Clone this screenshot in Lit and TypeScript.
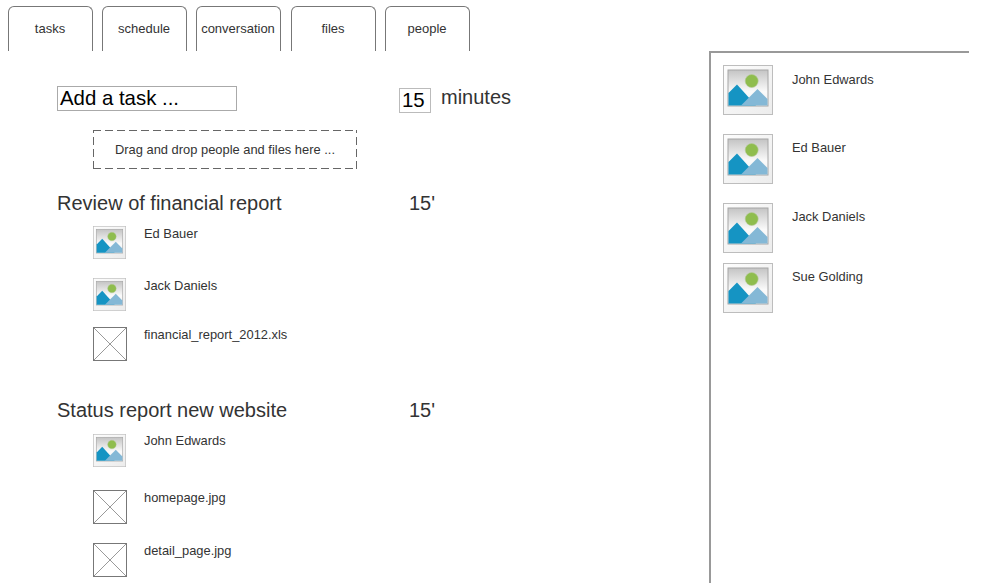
import { LitElement, html, css, svg } from "lit";
import { customElement } from "lit/decorators.js";

const pic = (size: number) => html`<svg class="icon" width=${size} height=${size} viewBox="0 0 50 50">
  ${svg`<defs>
    <linearGradient id="o" x1="0" y1="0" x2="1" y2="1"><stop offset="0" stop-color="#fdfdfd"/><stop offset="1" stop-color="#ececec"/></linearGradient>
    <linearGradient id="i" x1="0" y1="0" x2="0" y2="1"><stop offset="0" stop-color="#c4c4c4"/><stop offset="0.6" stop-color="#fafafa"/><stop offset="1" stop-color="#f2f2f2"/></linearGradient>
  </defs>
  <rect x="0.5" y="0.5" width="49" height="49" fill="url(#o)" stroke="#bdbdbd"/>
  <rect x="5" y="5" width="40" height="36" fill="url(#i)" stroke="#a6a6a6"/>
  <circle cx="28.7" cy="16" r="6.5" fill="#8fbd4e" stroke="#b5c99a" stroke-width="0.6"/>
  <path d="M5.5 28 L14 19.5 L33 40.5 L5.5 40.5 Z" fill="#1594c3"/>
  <path d="M18 40.5 L34.5 24 L44.5 34 L44.5 40.5 Z" fill="#84b8d6"/>`}
</svg>`;

const box = html`<svg class="icon" width="34" height="34" viewBox="0 0 34 34">
  ${svg`<rect x="0.5" y="0.5" width="33" height="33" fill="#fff" stroke="#777"/>
  <path d="M1 1 L33 33 M33 1 L1 33" stroke="#999" stroke-width="1" fill="none"/>`}
</svg>`;

const row = (top: number, h: number, icon: unknown, label: string, gap: number, dy = 1) =>
  html`<div class="item" style="margin-top:${top}px;height:${h}px">${icon}<span style="margin-left:${gap}px;margin-top:${dy}px">${label}</span></div>`;

const person = (top: number, label: string, dy: number) =>
  html`<div class="person" style="margin-top:${top}px">${pic(50)}<span style="margin-top:${dy}px">${label}</span></div>`;

@customElement("app-root")
export class AppRoot extends LitElement {
  static styles = css`
    :host { display: block; width: 989px; height: 583px; overflow: hidden; background: #fff;
      font-family: "Liberation Sans", Arial, sans-serif; color: #333; }
    .page { display: grid; grid-template-columns: 709px 260px; height: 583px; }
    .left { display: flex; flex-direction: column; min-width: 0; }
    .tabs { display: flex; gap: 9px; padding: 6px 0 0 8px; height: 45px; }
    .tab { width: 85px; box-sizing: border-box; height: 45px; border: 1px solid #777; border-bottom: 0;
      border-radius: 6px 6px 0 0; text-align: center; font-size: 13px; line-height: 44px; padding-right: 1px; white-space: nowrap; }
    .tab.wide { margin-right: 1px; }
    .main { padding: 35px 0 0 57px; display: flex; flex-direction: column; }
    .add { display: grid; grid-template-columns: 342px 32px auto; }
    .task { width: 180px; height: 25px; box-sizing: border-box; border: 1px solid #aaa; color: #000;
      font-size: 20.4px; line-height: 23px; padding-left: 2px; }
    .num { width: 32px; height: 25px; box-sizing: border-box; margin-top: 2px; border: 1px solid #bbb; color: #000;
      font-size: 20.4px; line-height: 23px; padding-left: 2px; }
    .min { font-size: 20px; margin-left: 10px; line-height: 23px; }
    .drop { width: 264px; height: 39px; box-sizing: border-box; margin: 17px 0 0 36px;
      background:
        repeating-linear-gradient(90deg, #666 0 8px, transparent 8px 12px) top left / 100% 1px no-repeat,
        repeating-linear-gradient(90deg, #666 0 8px, transparent 8px 12px) bottom left / 100% 1px no-repeat,
        repeating-linear-gradient(0deg, #666 0 8px, transparent 8px 12px) top left / 1px 100% no-repeat,
        repeating-linear-gradient(0deg, #666 0 8px, transparent 8px 12px) top right / 1px 100% no-repeat;
      font-size: 12.9px; line-height: 39px; text-align: center; }
    .head { display: grid; grid-template-columns: 352px auto; font-size: 20px; line-height: 24px; }
    .item { display: flex; margin-left: 36px; font-size: 12.9px; line-height: 14px; }
    .icon { flex: none; display: block; }
    .side { border-top: 2px solid #999; border-left: 2px solid #999; margin-top: 51px; box-sizing: border-box;
      padding: 12px 0 0 12px; display: flex; flex-direction: column; }
    .person { display: flex; font-size: 12.9px; line-height: 14px; }
    .person span { margin-left: 19px; }
  `;

  render() {
    return html`<div class="page">
      <div class="left">
        <div class="tabs">
          <div class="tab">tasks</div>
          <div class="tab">schedule</div>
          <div class="tab wide">conversation</div>
          <div class="tab">files</div>
          <div class="tab">people</div>
        </div>
        <div class="main">
          <div class="add">
            <div class="task">Add a task ...</div>
            <div class="num">15</div>
            <div class="min">minutes</div>
          </div>
          <div class="drop">Drag and drop people and files here ...</div>
          <div class="head" style="margin-top:22px"><span>Review of financial report</span><span>15'</span></div>
          ${row(11, 33, pic(33), "Ed Bauer", 18)}
          ${row(19, 33, pic(33), "Jack Daniels", 18)}
          ${row(16, 34, box, "financial_report_2012.xls", 17)}
          <div class="head" style="margin-top:37px"><span>Status report new website</span><span>15'</span></div>
          ${row(12, 33, pic(33), "John Edwards", 18, 0)}
          ${row(23, 34, box, "homepage.jpg", 17)}
          ${row(19, 34, box, "detail_page.jpg", 17)}
        </div>
      </div>
      <div class="side">
        ${person(0, "John Edwards", 8)}
        ${person(19, "Ed Bauer", 7)}
        ${person(19, "Jack Daniels", 7)}
        ${person(10, "Sue Golding", 7)}
      </div>
    </div>`;
  }
}
